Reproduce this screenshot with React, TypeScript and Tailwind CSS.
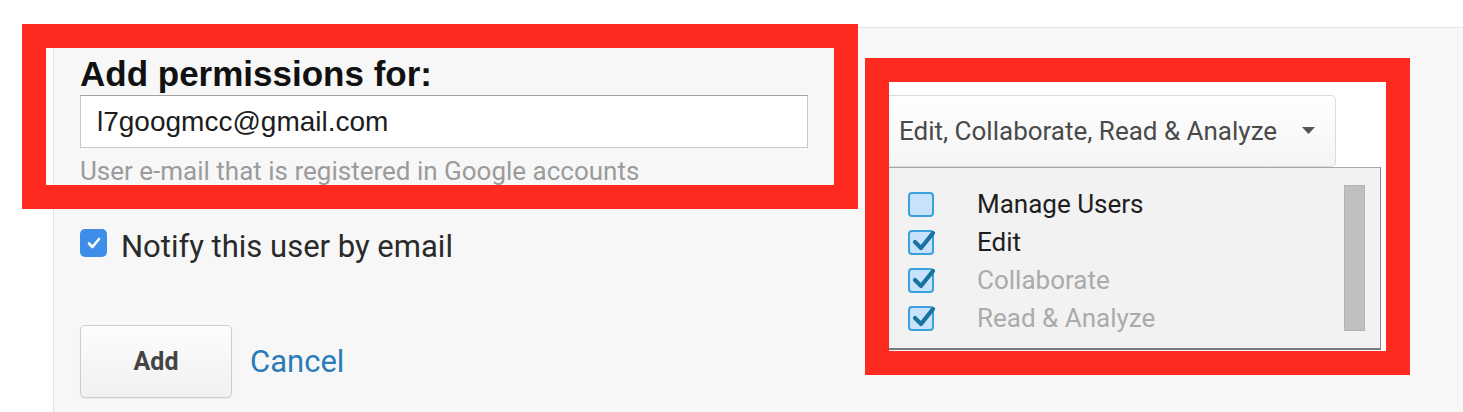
import React from "react";

const roboto = { fontFamily: "Roboto, 'Noto Sans', sans-serif" };

function BlueCheck({ checked }: { checked: boolean }) {
  return (
    <div className="relative w-[26px] h-[25px] rounded-[4px] border-2 border-[#38a2dc] bg-[#c7e2fa] shrink-0">
      {checked && (
        <svg className="absolute left-[1px] top-[-4px]" width="26" height="26" viewBox="0 0 26 26">
          <path d="M4 14 L10 20 L22 5" fill="none" stroke="#17739f" strokeWidth="4.2" strokeLinecap="round" strokeLinejoin="round" />
        </svg>
      )}
    </div>
  );
}

export default function App() {
  const items = [
    { label: "Manage Users", checked: false, dim: false },
    { label: "Edit", checked: true, dim: false },
    { label: "Collaborate", checked: true, dim: true },
    { label: "Read & Analyze", checked: true, dim: true },
  ];
  return (
    <div className="relative w-[1463px] h-[412px] bg-white overflow-hidden">
      <div className="ml-[53px] mt-[27px] h-[385px] border-l border-t border-[#e3e3e3] bg-[#f7f7f7] flex">
        {/* Left column */}
        <div className="pl-[26px] pt-[27px] w-[754px] shrink-0 flex flex-col">
          <h1 className="text-[35px] leading-[38px] font-bold text-[#111] whitespace-nowrap" style={{ fontFamily: "'Liberation Sans', Arial, sans-serif" }}>
            Add permissions for:
          </h1>
          <div className="mt-[2px] w-[728px] h-[53px] bg-white border border-[#c8c8c8] border-t-[#a3a3a3] flex items-center pl-[16px]">
            <span className="text-[28px] text-[#1c1c1c]" style={{ fontFamily: "'Liberation Sans', Arial, sans-serif" }}>
              l7googmcc@gmail.com
            </span>
          </div>
          <p className="mt-[8px] text-[26px] leading-[30px] text-[#9b9b9b] whitespace-nowrap" style={roboto}>
            User e-mail that is registered in Google accounts
          </p>
          <div className="mt-[43px] flex items-start gap-[14px]">
            <div className="w-[27px] h-[28px] rounded-[5px] bg-[#3d8de9] flex items-center justify-center shrink-0">
              <svg width="18" height="18" viewBox="0 0 18 18">
                <path d="M4 9.5 L7.5 13 L14 5" fill="none" stroke="#fff" strokeWidth="2.6" strokeLinecap="round" strokeLinejoin="round" />
              </svg>
            </div>
            <span className="text-[31px] leading-[36px] text-[#2a2a2a] whitespace-nowrap" style={roboto}>
              Notify this user by email
            </span>
          </div>
          <div className="mt-[60px] flex items-center gap-[18px]">
            <button className="w-[152px] h-[73px] rounded-[5px] border border-[#cdcdcd] bg-gradient-to-b from-[#fdfdfd] to-[#f0f0f0] shadow-[0_1px_1px_rgba(0,0,0,0.06)] text-[25px] font-bold text-[#444]" style={roboto}>
              Add
            </button>
            <span className="text-[31px] leading-[36px] text-[#2a7bb8]" style={roboto}>
              Cancel
            </span>
          </div>
        </div>

        {/* Right column */}
        <div className="mt-[30px] ml-[57px] w-[545px] h-[317px] shrink-0 border-[24px] border-[#fe2a1f] bg-white pt-[13px]">
          <div className="w-[447px] h-[72px] rounded-r-[5px] border border-l-0 border-[#dcdcdc] bg-gradient-to-b from-[#fefefe] to-[#f5f5f5] flex items-center justify-between pl-[10px] pr-[20px]">
            <span className="text-[26px] text-[#4a4a4a] whitespace-nowrap" style={roboto}>
              Edit, Collaborate, Read &amp; Analyze
            </span>
            <svg width="13" height="8" viewBox="0 0 13 8">
              <path d="M0 0 L13 0 L6.5 7 Z" fill="#555" />
            </svg>
          </div>
          <div className="w-[492px] h-[183px] bg-[#f2f2f2] border-t border-r border-b-2 border-t-[#a8a8a8] border-r-[#8a8a8a] border-b-[#7a7a7a] flex">
            <div className="flex-1 pt-[17px] pl-[19px]">
              {items.map((it) => (
                <div key={it.label} className="h-[38px] flex items-center">
                  <BlueCheck checked={it.checked} />
                  <span
                    className={`ml-[43px] text-[26px] whitespace-nowrap ${it.dim ? "text-[#ababab]" : "text-[#1e1e1e]"}`}
                    style={roboto}
                  >
                    {it.label}
                  </span>
                </div>
              ))}
            </div>
            <div className="mt-[17px] mr-[15px] w-[21px] h-[146px] bg-[#c0c0c0] border border-[#b3b3b3]" />
          </div>
        </div>
      </div>

      {/* Annotation box 1 */}
      <div className="pointer-events-none absolute left-[22px] top-[24px] w-[836px] h-[185px] border-[24px] border-[#fe2a1f]" />
    </div>
  );
}
